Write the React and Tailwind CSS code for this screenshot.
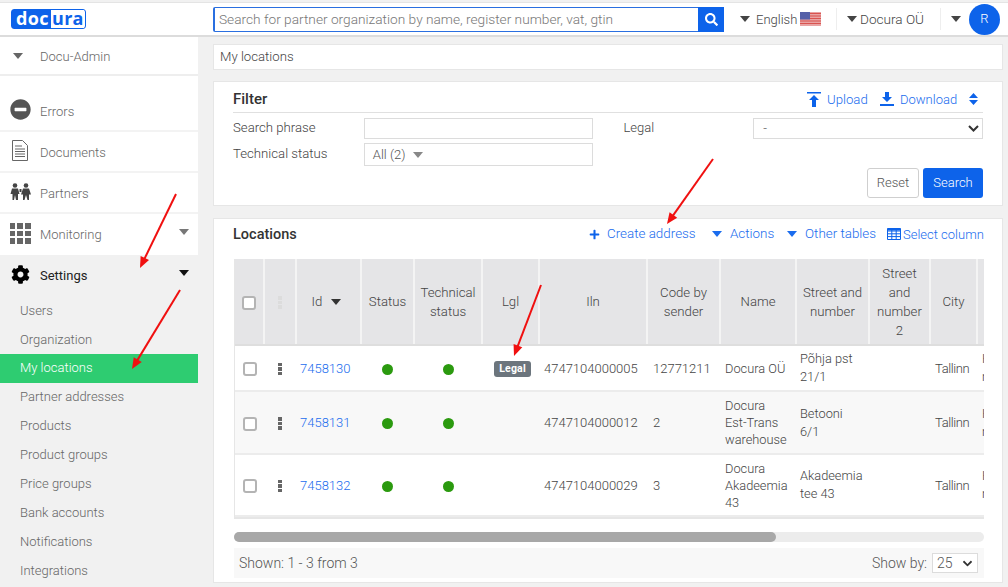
import React from "react";
import { FaCog, FaMinusCircle, FaPlus, FaSearch } from "react-icons/fa";

const Caret = ({ className = "" }) => (
  <svg width="10" height="6" viewBox="0 0 10 6" className={className}><path d="M0 0h10L5 6z" fill="currentColor" /></svg>
);

const Chevron = ({ className = "" }) => (
  <svg width="11" height="7" viewBox="0 0 11 7" className={className}><path d="M1 1l4.500 4.500L10 1" fill="none" stroke="currentColor" strokeWidth="2" /></svg>
);

const Check = () => <span className="inline-block w-[14px] h-[14px] rounded-[3px] border-2 border-[#b4b4b4] bg-white align-middle" />;

const Dots = ({ color = "bg-[#666]" }) => (
  <span className="inline-flex flex-col gap-[1px] align-middle">
    <i className={`block w-[4px] h-[3.500px] ${color}`} />
    <i className={`block w-[4px] h-[3.500px] ${color}`} />
    <i className={`block w-[4px] h-[3.500px] ${color}`} />
  </span>
);

const Dot = () => <span className="inline-block w-[11px] h-[11px] rounded-full bg-[#2b9a0f] align-middle" />;

const subs = ["Users", "Organization", "My locations", "Partner addresses", "Products", "Product groups", "Price groups", "Bank accounts", "Notifications", "Integrations"];

const DocIcon = () => (
  <svg width="16" height="21" viewBox="0 0 16 21" fill="none" stroke="#666" strokeWidth="1">
    <path d="M.5.5h10l5 5v15H.5z" />
    <path d="M3 6h7M3 9h10M3 11.500h10M3 14h10M3 16.500h10" />
  </svg>
);

const PartnersIcon = () => (
  <svg width="21" height="17" viewBox="0 0 21 17" fill="#444">
    <circle cx="5" cy="2.500" r="2.300" /><circle cx="16" cy="2.500" r="2.300" />
    <path d="M2 5.500h6l1.500 5.500-1.500 0V17H6l-1-5-1 5H2.500v-6H.5z" />
    <path d="M13 5.500h6l2 6h-2v5.500h-1.500l-1.500-5-1.500 5H13v-5.500h-2z" />
    <path d="M9.500 6h2v3h-2z" />
  </svg>
);

const GridIcon = () => (
  <div className="grid grid-cols-3 gap-[2px] w-[21px]">
    {Array.from({ length: 9 }).map((_, i) => <i key={i} className="block w-[5.700px] h-[5.500px] bg-[#666]" />)}
  </div>
);

const UploadIcon = () => (
  <svg width="14" height="15" viewBox="0 0 14 15" fill="#0d63ea"><path d="M0 0h14v1.500H0zM7 3l5 5H9v7H5V8H2z" /></svg>
);
const DownloadIcon = () => (
  <svg width="14" height="14" viewBox="0 0 14 14" fill="#0d63ea"><path d="M5 0h4v5h3L7 10 2 5h3zM0 12h14v2H0z" /></svg>
);
const TableIcon = () => (
  <svg width="14" height="12" viewBox="0 0 14 12" fill="none" stroke="#0d63ea" strokeWidth="1">
    <path d="M.5.5h13v11H.5z" /><path d="M.5 3h13M.5 5.800h13M.5 8.600h13M4.800 1v10M9.200 1v10" />
    <path d="M.5 1.500h13" strokeWidth="2" />
  </svg>
);

const Flag = () => (
  <svg width="21" height="14" viewBox="0 0 21 14">
    <rect width="21" height="14" fill="#e9a3a3" />
    <path d="M0 1.500h21M0 4h21M0 6.500h21M0 9h21M0 11.500h21" stroke="#d9534f" strokeWidth="1.200" />
    <rect width="10" height="7.500" fill="#5560a8" />
  </svg>
);

const Th = ({ children, className = "" }) => (
  <th className={`bg-[#e5e5e7] border-r-2 border-[#f4f4f4] border-b-2 border-b-[#dedede] font-light text-[13.200px] leading-[19px] text-[#444] text-center align-middle px-1 ${className}`}>{children}</th>
);

const rows = [
  { id: "7458130", legal: true, iln: "4747104000005", code: "12771211", name: ["Docura OÜ"], street: ["Põhja pst", "21/1"], bg: "bg-white", h: "h-[46px]" },
  { id: "7458131", iln: "4747104000012", code: "2", name: ["Docura", "Est-Trans", "warehouse"], street: ["Betooni", "6/1"], bg: "bg-[#f8f8f8]", h: "h-[63px]" },
  { id: "7458132", iln: "4747104000029", code: "3", name: ["Docura", "Akadeemia", "43"], street: ["Akadeemia", "tee 43"], bg: "bg-white", h: "h-[62px]" },
];

const Lines = ({ items }) => <>{items.map((t) => <div key={t}>{t}</div>)}</>;

export default function App() {
  return (
    <div className="relative w-[1008px] h-[587px] overflow-hidden bg-[#f1f1f1] text-[#555] font-light text-[13px]" style={{ fontFamily: 'Roboto, "Open Sans", sans-serif' }}>
      {/* Header */}
      <header className="relative h-[35px] mt-[2px] bg-white border-t border-[#e4e4e4] border-b-2 border-b-[#dcdcdc] flex items-center whitespace-nowrap">
        <div className="ml-[11px] w-[75px] h-[20px] flex rounded-[3px] border border-[#0d63ea] text-[18px] leading-[17px] font-bold tracking-[0.3px]" style={{ fontFamily: '"Open Sans", sans-serif' }}>
          <span className="bg-[#0d63ea] text-white pl-[4px] w-[39px]">doc</span>
          <span className="bg-white text-[#0d63ea] pl-[1px]">ura</span>
        </div>
        <div className="ml-[127px] flex w-[511px] h-[25px]">
          <div className="flex-1 border-2 border-r-0 border-[#2a6fe0] border-t-[1px] border-b-[1px] rounded-l-[2px] pl-[4px] flex items-center text-[#777] text-[13.700px]">Search for partner organization by name, register number, vat, gtin</div>
          <div className="w-[26px] bg-[#0d63ea] flex items-center justify-center text-white"><FaSearch size={13} /></div>
        </div>
        <Caret className="ml-[16px] text-[#444]" />
        <span className="ml-[6px] w-[44px] text-[13px] text-[#444] pt-[1px]">English</span>
        <Flag />
        <span className="ml-[15px] w-px h-[22px] bg-[#eee]" />
        <Caret className="ml-[10px] text-[#444]" />
        <span className="ml-[3px] w-[65px] text-[13.600px] text-[#444]">Docura OÜ</span>
        <span className="ml-[15px] w-px h-[22px] bg-[#eee]" />
        <Caret className="ml-[10px] text-[#444]" />
        <span className="ml-[8px] w-[31px] h-[31px] rounded-full bg-[#0d63ea] text-white flex items-center justify-center text-[13px]">R</span>
      </header>

      <div className="flex h-[550px]">
        {/* Sidebar */}
        <aside className="w-[198px] shrink-0">
          <div className="h-[39px] bg-white border-b-2 border-[#eeeeee] flex items-center pl-[13px] text-[#666]">
            <Caret /><span className="ml-[17px] pt-[2px]">Docu-Admin</span>
          </div>
          <div className="bg-white pt-[14px]">
            {[
              { icon: <FaMinusCircle size={21} color="#555" />, label: "Errors", h: "h-[42px]" },
              { icon: <DocIcon />, label: "Documents", h: "h-[41px]" },
              { icon: <PartnersIcon />, label: "Partners", h: "h-[41px]" },
            ].map((it) => (
              <div key={it.label} className={`${it.h} border-b-2 border-[#f3f3f3] flex items-center text-[#666]`}>
                <span className="w-[40px] flex justify-center -mt-[2px]">{it.icon}</span>
                <span className="pt-[3px]">{it.label}</span>
              </div>
            ))}
            <div className="h-[41px] flex items-center text-[#666]">
              <span className="w-[40px] flex justify-center -mt-[2px]"><GridIcon /></span>
              <span className="pt-[1px]">Monitoring</span>
              <Caret className="ml-auto mr-[9px] mb-[6px] text-[#777]" />
            </div>
          </div>
          <div className="h-[41px] flex items-center text-[#222]">
            <span className="w-[40px] flex justify-center -mt-[2px]"><FaCog size={19} color="#000" /></span>
            <span className="pt-[1px] font-normal">Settings</span>
            <Caret className="ml-auto mr-[9px] mb-[6px] text-[#111]" />
          </div>
          <nav>
            {subs.map((s) => (
              <div key={s} className={`h-[28.900px] flex items-center pl-[20px] ${s === "My locations" ? "bg-[#2ecc71] text-white" : "text-[#666]"}`}>{s}</div>
            ))}
          </nav>
        </aside>

        {/* Main */}
        <main className="ml-[15px] w-[790px] pt-[7px]">
          <div className="h-[26px] bg-white border border-[#e6e6e6] flex items-center pl-[6px] text-[13.200px] text-[#444]">My locations</div>

          <section className="mt-[11px] h-[125px] bg-white border border-[#e6e6e6] px-[19px] relative">
            <div className="h-[31px] pt-[5px] border-b border-[#e0e0e0] flex items-center">
              <span className="text-[15px] font-medium text-[#333]">Filter</span>
              <div className="ml-auto flex items-center text-[#1a6cee] text-[13.200px]">
                <UploadIcon /><span className="ml-[6px] w-[40px]">Upload</span>
                <span className="ml-[13px]"><DownloadIcon /></span><span className="ml-[6px] w-[57px] text-[13px]">Download</span>
                <svg width="9" height="12" viewBox="0 0 9 12" fill="#0d63ea" className="ml-[12px] mr-[5px]"><path d="M4.500 0L9 5H0zM0 7h9l-4.500 5z" /></svg>
              </div>
            </div>
            <div className="flex mt-[5px]">
              <div className="w-[131px] text-[13.200px] text-[#444] leading-[20px]">
                <div>Search phrase</div>
                <div className="mt-[6px]">Technical status</div>
              </div>
              <div className="w-[230px]">
                <div className="h-[21px] border border-[#dcdcdc]" />
                <div className="h-[23px] mt-[4px] border border-[#dcdcdc] flex items-center pl-[8px] text-[#555]">All (2)<Caret className="ml-[7px] text-[#888]" /></div>
              </div>
              <div className="w-[129px] pl-[30px] text-[#444] leading-[20px]">Legal</div>
              <div className="ml-[31px] w-[230px] h-[21px] border border-[#dcdcdc] flex items-center pl-[9px] text-[#555]">-<Chevron className="ml-auto mr-[3px] text-[#333]" /></div>
            </div>
            <div className="absolute right-[19px] top-[86px] flex gap-[4px]">
              <button className="w-[52px] h-[30px] border border-[#cfcfcf] rounded-[3px] bg-white text-[13px] text-[#555]">Reset</button>
              <button className="w-[60px] h-[30px] rounded-[3px] bg-[#0d63ea] text-white text-[13px]">Search</button>
            </div>
          </section>

          <section className="mt-[12px] h-[365px] bg-white border border-[#e6e6e6] pl-[20px] pr-[18px]">
            <div className="h-[31px] mb-[9px] flex items-center">
              <span className="-ml-[1px] text-[14.500px] font-medium text-[#333]">Locations</span>
              <div className="ml-auto flex items-center text-[#1a6cee] text-[13.400px] whitespace-nowrap">
                <FaPlus size={11} color="#0d63ea" /><span className="ml-[7px] w-[89px]">Create address</span>
                <Caret className="ml-[16px]" /><span className="ml-[8px] w-[42px]">Actions</span>
                <Caret className="ml-[15px]" /><span className="ml-[8px] w-[72px]">Other tables</span>
                <span className="ml-[10px]"><TableIcon /></span><span className="ml-[2px] w-[81px] text-[13px]">Select column</span>
              </div>
            </div>

            <div className="overflow-hidden w-[750px] border-l border-[#e6e6e6] border-b-2 border-b-[#e6e6e6]">
              <table className="table-fixed border-collapse w-[780px] text-[#444]">
                <colgroup>
                  {[29, 32, 65, 53, 68, 57, 108, 73, 76, 73, 61, 47, 38].map((w, i) => <col key={i} style={{ width: w }} />)}
                </colgroup>
                <thead>
                  <tr className="h-[86px]">
                    <Th className="!px-0"><Check /></Th>
                    <Th className="!px-0"><Dots color="bg-[#dcdcdc]" /></Th>
                    <Th><span className="-ml-[4px]">Id</span><Caret className="inline ml-[9px] mb-[2px] text-[#333]" /></Th>
                    <Th>Status</Th>
                    <Th>Technical<br />status</Th>
                    <Th>Lgl</Th>
                    <Th>Iln</Th>
                    <Th>Code by<br />sender</Th>
                    <Th>Name</Th>
                    <Th className="!px-0">Street and<br />number</Th>
                    <Th>Street<br />and<br />number<br />2</Th>
                    <Th>City</Th>
                    <Th></Th>
                  </tr>
                </thead>
                <tbody className="text-[13px] leading-[17px]">
                  {rows.map((r) => (
                    <tr key={r.id} className={`${r.bg} ${r.h} border-b-2 border-[#ececec]`}>
                      <td className="text-center"><Check /></td>
                      <td className="text-center"><Dots /></td>
                      <td className="pl-[4px] text-[#1a6cee]">{r.id}</td>
                      <td className="text-center"><Dot /></td>
                      <td className="text-center"><Dot /></td>
                      <td className="text-center">{r.legal && <span className="inline-block ml-[4px] w-[37px] h-[16px] rounded-[3px] bg-[#6c757d] text-white text-[10.500px] leading-[16px] font-bold tracking-[0.2px]">Legal</span>}</td>
                      <td className="pl-[5px]">{r.iln}</td>
                      <td className="pl-[6px]">{r.code}</td>
                      <td className="pl-[5px] text-[12.800px]"><Lines items={r.name} /></td>
                      <td className="pl-[4px] leading-[18px] text-[12.800px]"><Lines items={r.street} /></td>
                      <td />
                      <td className="pl-[5px] tracking-[-0.4px]">Tallinn</td>
                      <td className="pl-[5px] leading-[18px]"><div>Harju</div><div>maakond</div></td>
                    </tr>
                  ))}
                </tbody>
              </table>
            </div>

            <div className="mt-[13px] h-[10px] rounded-[5px] bg-[#ececec]">
              <div className="w-[542px] h-full rounded-[5px] bg-[#a8a8a8]" />
            </div>

            <div className="mt-[6px] h-[30px] bg-[#f8f8f8] flex items-center pl-[5px] pr-[6px] text-[14px] text-[#555]">
              <span>Shown: 1 - 3 from 3</span>
              <span className="ml-auto">Show by:</span>
              <div className="ml-[5px] w-[46px] h-[20px] border border-[#dcdcdc] bg-white flex items-center pl-[4px]">25<Chevron className="ml-auto mr-[4px] text-[#333] scale-90" /></div>
            </div>
          </section>
        </main>
      </div>

      {/* Annotation arrows */}
      <svg width="1008" height="587" className="absolute inset-0 pointer-events-none">
        {[
          [176, 194, 140, 268],
          [180, 290, 132, 369],
          [713, 159, 667, 224],
          [541, 285, 514, 356],
        ].map(([x1, y1, x2, y2], i) => {
          const a = Math.atan2(y2 - y1, x2 - x1);
          const l = 12, w = 0.4;
          const p = `${x2},${y2} ${x2 - l * Math.cos(a - w)},${y2 - l * Math.sin(a - w)} ${x2 - l * Math.cos(a + w)},${y2 - l * Math.sin(a + w)}`;
          return (
            <g key={i}>
              <line x1={x1} y1={y1} x2={x2 - 6 * Math.cos(a)} y2={y2 - 6 * Math.sin(a)} stroke="#f01010" strokeWidth="2" />
              <polygon points={p} fill="#f01010" />
            </g>
          );
        })}
      </svg>
    </div>
  );
}
